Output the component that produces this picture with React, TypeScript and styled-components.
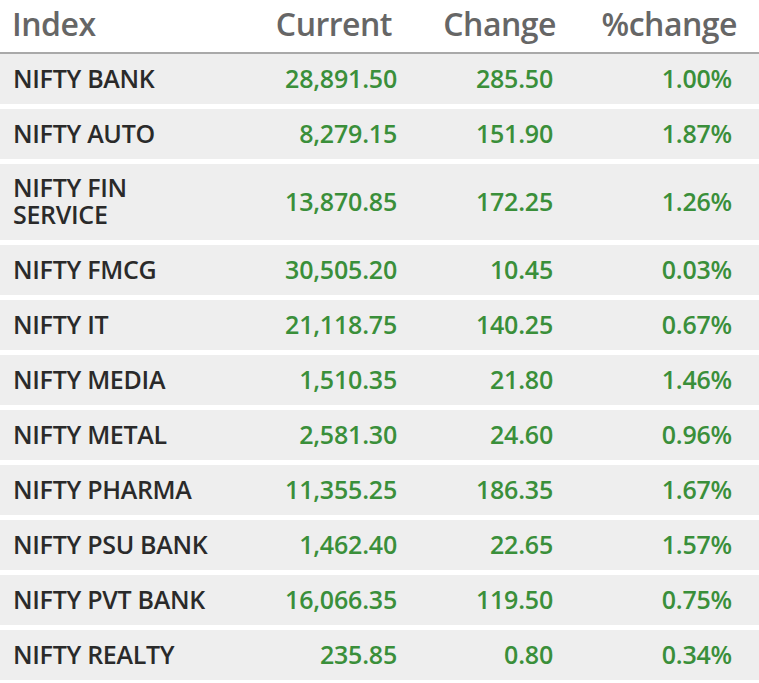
import React from 'react'
import styled, { createGlobalStyle } from 'styled-components'

const GlobalStyle = createGlobalStyle`
  html, body {
    margin: 0;
    padding: 0;
    background: #ffffff;
  }
`

type Row = {
  name: string
  current: string
  change: string
  pct: string
}

const rows: Row[] = [
  { name: 'NIFTY BANK', current: '28,891.50', change: '285.50', pct: '1.00%' },
  { name: 'NIFTY AUTO', current: '8,279.15', change: '151.90', pct: '1.87%' },
  { name: 'NIFTY FIN\nSERVICE', current: '13,870.85', change: '172.25', pct: '1.26%' },
  { name: 'NIFTY FMCG', current: '30,505.20', change: '10.45', pct: '0.03%' },
  { name: 'NIFTY IT', current: '21,118.75', change: '140.25', pct: '0.67%' },
  { name: 'NIFTY MEDIA', current: '1,510.35', change: '21.80', pct: '1.46%' },
  { name: 'NIFTY METAL', current: '2,581.30', change: '24.60', pct: '0.96%' },
  { name: 'NIFTY PHARMA', current: '11,355.25', change: '186.35', pct: '1.67%' },
  { name: 'NIFTY PSU BANK', current: '1,462.40', change: '22.65', pct: '1.57%' },
  { name: 'NIFTY PVT BANK', current: '16,066.35', change: '119.50', pct: '0.75%' },
  { name: 'NIFTY REALTY', current: '235.85', change: '0.80', pct: '0.34%' },
]

const Table = styled.div`
  width: 759px;
  display: flex;
  flex-direction: column;
  gap: 5px;
`

const HeaderRow = styled.div`
  display: grid;
  grid-template-columns: 230px 172px 151px 181px;
  height: 52px;
  border-bottom: 2px solid #a9a9a9;
  margin-bottom: -5px;
  align-items: center;
`

const HeadCell = styled.div<{ $right?: number; $left?: boolean }>`
  font-family: 'Open Sans', 'Noto Sans', sans-serif;
  font-size: 32px;
  font-weight: 600;
  color: #666666;
  text-align: ${(p) => (p.$left ? 'left' : 'right')};
  padding-left: ${(p) => (p.$left ? '12px' : '0')};
  margin-right: ${(p) => p.$right ?? 0}px;
  white-space: nowrap;
  line-height: 1;
  padding-bottom: 4px;
  letter-spacing: -0.5px;
`

const DataRow = styled.div<{ $tall?: boolean }>`
  display: grid;
  grid-template-columns: 230px 172px 151px 181px;
  height: ${(p) => (p.$tall ? 76 : 50)}px;
  background: #eeeeee;
  align-items: center;
`

const NameCell = styled.div`
  font-family: 'Open Sans', 'Noto Sans', sans-serif;
  font-size: 25px;
  font-weight: 600;
  line-height: 27px;
  color: #2a2a2a;
  padding-left: 13px;
  padding-bottom: 2px;
  white-space: pre-line;
  letter-spacing: -0.3px;
`

const NumCell = styled.div<{ $shift?: number }>`
  font-family: 'Open Sans', 'Noto Sans', sans-serif;
  font-size: 25px;
  font-weight: 600;
  line-height: 27px;
  color: #3a8f3a;
  text-align: right;
  margin-right: ${(p) => p.$shift ?? 0}px;
  padding-bottom: 2px;
  letter-spacing: -0.2px;
`

const App: React.FC = () => {
  return (
    <>
      <GlobalStyle />
      <Table>
        <HeaderRow>
          <HeadCell $left>Index</HeadCell>
          <HeadCell $right={10}>Current</HeadCell>
          <HeadCell $right={-3}>Change</HeadCell>
          <HeadCell $right={-3}>%change</HeadCell>
        </HeaderRow>
        {rows.map((r) => (
          <DataRow key={r.name} $tall={r.name.includes('\n')}>
            <NameCell>{r.name}</NameCell>
            <NumCell $shift={5}>{r.current}</NumCell>
            <NumCell>{r.change}</NumCell>
            <NumCell $shift={2}>{r.pct}</NumCell>
          </DataRow>
        ))}
      </Table>
    </>
  )
}

export default App
